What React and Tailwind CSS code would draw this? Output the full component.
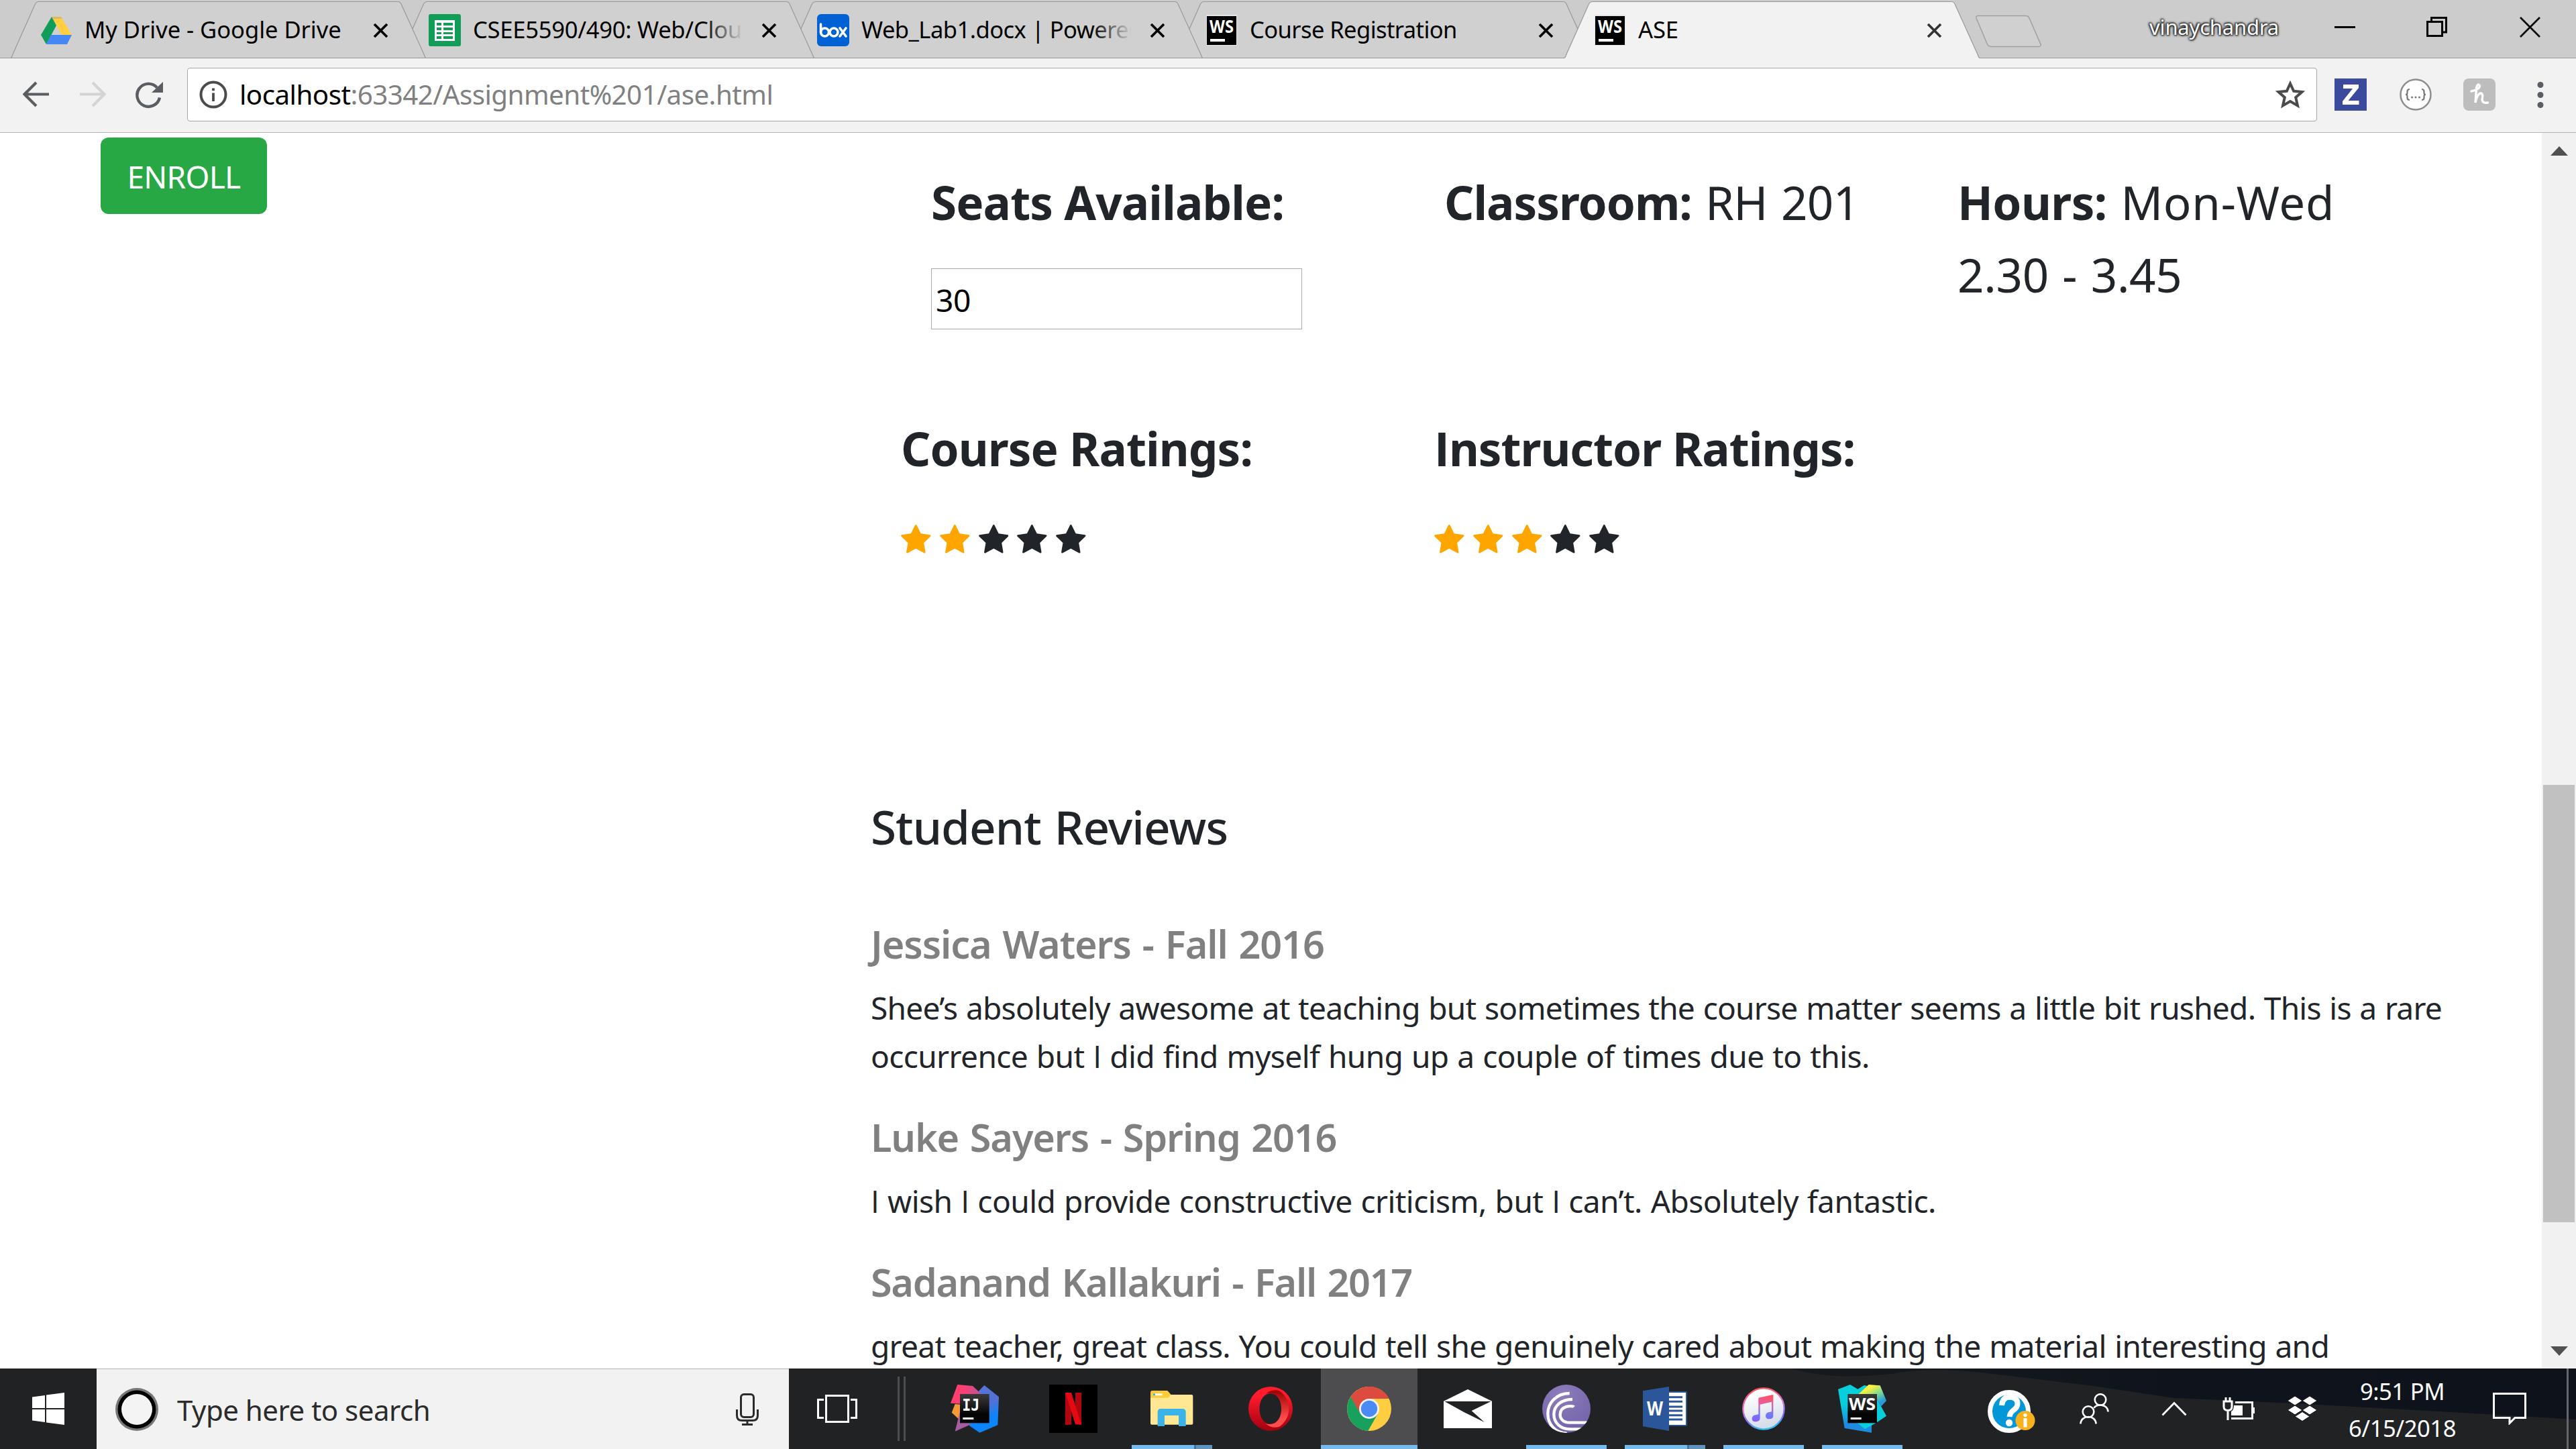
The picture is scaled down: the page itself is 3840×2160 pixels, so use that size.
import React from "react";

/* Capital I is set in Open Sans, whose I has no serifs. */
function T({ children, className = "" }) {
  const parts = String(children).split(/(I)/);
  return (
    <span className={className}>
      {parts.map((p, i) =>
        p === "I" ? (
          <span key={i} className="font-['Open_Sans']">I</span>
        ) : (
          <React.Fragment key={i}>{p}</React.Fragment>
        )
      )}
    </span>
  );
}

/* ---------- favicons ---------- */

function DriveFavicon() {
  return (
    <svg className="w-[48px] h-[48px]" viewBox="0 0 48 48">
      <path d="M17 4H31L47 31H32Z" fill="#ffcf40" />
      <path d="M17 4L24 17L9 45L1 31Z" fill="#109d59" />
      <path d="M16 31H47L40 45H9Z" fill="#4587f4" />
      <path d="M17 4H31L33 7H19Z" fill="#b9a76f" opacity="0.5" />
    </svg>
  );
}

function SheetsFavicon() {
  return (
    <svg className="w-[48px] h-[48px]" viewBox="0 0 48 48">
      <rect width="48" height="48" rx="3" fill="#109d58" />
      <path
        d="M9 9H39V40H9ZM12 13V17H19V13ZM22 13V17H36V13ZM12 20V24H19V20ZM22 20V24H36V20ZM12 27V30H19V27ZM22 27V30H36V27ZM12 33V37H19V33ZM22 33V37H36V33Z"
        fill="#fff"
        fillRule="evenodd"
      />
    </svg>
  );
}

function BoxFavicon() {
  return (
    <svg className="w-[48px] h-[48px]" viewBox="0 0 48 48">
      <rect width="48" height="48" rx="6" fill="#0061d5" />
      <g fill="none" stroke="#fff" strokeWidth="3.6" strokeLinecap="round">
        <path d="M5.5 15V27" />
        <circle cx="11.5" cy="27" r="6" />
        <circle cx="25" cy="27" r="6" />
        <path d="M34 21L43 33M43 21L34 33" />
      </g>
    </svg>
  );
}

function WsFavicon() {
  return (
    <svg className="w-[48px] h-[48px]" viewBox="0 0 48 48">
      <rect x="1" y="1" width="46" height="46" fill="#e6e6e6" />
      <rect x="2" y="3" width="44" height="43" fill="#000" />
      <text x="6" y="27.500" textLength="36" lengthAdjust="spacingAndGlyphs" fontFamily="Open Sans" fontWeight="700" fontSize="27" fill="#fff">WS</text>
      <rect x="7" y="37" width="22" height="4" fill="#fff" />
    </svg>
  );
}

/* ---------- tab strip ---------- */

const tabs = [
  { title: "My Drive - Google Drive", icon: DriveFavicon, track: "tracking-[-0.001em]", z: "z-40", first: true },
  { title: "CSEE5590/490: Web/Clou", icon: SheetsFavicon, track: "tracking-[-0.0076em]", z: "z-30", fade: true },
  { title: "Web_Lab1.docx | Powered", icon: BoxFavicon, track: "tracking-[-0.0155em]", z: "z-20", fade: true },
  { title: "Course Registration", icon: WsFavicon, track: "tracking-[-0.0172em]", z: "z-10" },
  { title: "ASE", icon: WsFavicon, track: "tracking-[-0.003em]", z: "z-50", active: true },
];

function Tab({ tab }) {
  const Icon = tab.icon;
  return (
    <div className={`relative flex h-[87px] w-[619px] shrink-0 items-start pl-[44px] ${tab.z} ${tab.first ? "" : "-ml-[40px]"}`}>
      <svg className="absolute left-0 top-0 h-[87px] w-[619px]" viewBox="0 0 619 87">
        <path
          d="M0 87Q2 85 3 81L36 7Q38 2.5 42 2.5H577Q581 2.5 582.5 7L616 81Q617 85 619 87Z"
          fill={tab.active ? "#f2f2f2" : "#d0d0d0"}
        />
        <path
          d={tab.active ? "M0 86.5Q2 85 3 81L36 7Q38 2.5 42 2.5H577Q581 2.5 582.5 7L616 81Q617 85 619 86.5" : "M0 86.5Q2 85 3 81L36 7Q38 2.5 42 2.5H577Q581 2.5 582.5 7L616 81Q617 85 619 86.5H0"}
          fill="none"
          stroke="#999"
          strokeWidth="1.2"
        />
      </svg>
      <div className="relative mt-[21px] h-[48px] w-[48px]">
        <Icon />
      </div>
      <div className="relative ml-[18px] mt-[19px] h-[50px] w-[403px] overflow-hidden whitespace-nowrap">
        <T className={`block text-[34.56px] leading-[50px] text-black ${tab.track}`}>{tab.title}</T>
        {tab.fade && <div className="absolute right-0 top-0 h-full w-[60px] bg-gradient-to-r from-[#d0d0d000] to-[#d0d0d0]" />}
      </div>
      <svg className="relative ml-[27px] mt-[35px] h-[21px] w-[23px]" viewBox="0 0 23 21">
        <path d="M2 1L21 20M21 1L2 20" stroke={tab.active ? "#333" : "#000"} strokeWidth="3.6" />
      </svg>
    </div>
  );
}

function TabStrip() {
  return (
    <div className="relative flex h-[87px] bg-[#cccccc] pl-[16px]">
      <div className="absolute bottom-0 left-0 h-px w-full bg-[#999]" />
      {tabs.map((t) => (
        <Tab key={t.title} tab={t} />
      ))}
      <svg className="relative -ml-[7px] mt-[22px] h-[49px] w-[100px]" viewBox="0 0 100 49">
        <path d="M5 1.5H75Q80 1.5 81 5L98 44Q99 47.500 95 47.500H25Q20 47.500 18.500 44L2 5Q1 1.500 5 1.500Z" fill="#d0d0d0" stroke="#a0a0a0" strokeWidth="1.5" />
      </svg>
      <div className="ml-auto flex items-start pr-[53px]">
        <span className="mt-[17px] text-[31px] leading-[46px] tracking-[-0.2px] text-white [text-shadow:0_0_3px_#222,0_0_4px_#222,1px_1px_3px_#222,-1px_-1px_3px_#222]">vinaychandra</span>
        <svg className="ml-[83px] mt-[25px] h-[31px] w-[31px]" viewBox="0 0 31 31"><path d="M0 15.500H31" stroke="#000" strokeWidth="3" /></svg>
        <svg className="ml-[106px] mt-[25px] h-[31px] w-[31px]" viewBox="0 0 31 31"><path d="M1.500 7.500H23.500V28.500H1.500ZM7.500 7.500V1.500H29.500V23H23.500" fill="none" stroke="#000" strokeWidth="3" /></svg>
        <svg className="ml-[108px] mt-[25px] h-[31px] w-[31px]" viewBox="0 0 31 31"><path d="M1 1L30 30M30 1L1 30" stroke="#000" strokeWidth="2.600" /></svg>
      </div>
    </div>
  );
}

/* ---------- toolbar ---------- */

function Toolbar() {
  return (
    <div className="flex h-[111px] items-start border-b border-[#b4b4b4] bg-[#f2f2f2]">
      <svg className="ml-[34px] mt-[34px] h-[40px] w-[40px]" viewBox="0 0 40 40"><path d="M20 2L2.500 19.500L20 37M3 19.500H39" fill="none" stroke="#5a5d61" strokeWidth="4.200" /></svg>
      <svg className="ml-[44px] mt-[34px] h-[40px] w-[40px]" viewBox="0 0 40 40"><path d="M20 2L37.500 19.500L20 37M1 19.500H37" fill="none" stroke="#d3d4d5" strokeWidth="4.200" /></svg>
      <svg className="ml-[43px] mt-[34px] h-[42px] w-[43px]" viewBox="0 0 43 42">
        <path d="M37 24.500A17 17 0 1 1 33 9.500" fill="none" stroke="#5a5d61" strokeWidth="4.400" />
        <path d="M42 1V17H25Z" fill="#5a5d61" />
      </svg>
      <div className="ml-[35px] mt-[14px] flex h-[80px] w-[3175px] items-center rounded-[4px] border border-[#a6a6a6] bg-white pl-[17px] pr-[16px]">
        <svg className="h-[42px] w-[42px] shrink-0" viewBox="0 0 42 42">
          <circle cx="21" cy="21" r="18.500" fill="none" stroke="#4b4b4b" strokeWidth="4" />
          <path d="M21 18.500V31" stroke="#4b4b4b" strokeWidth="3.800" />
          <path d="M21 11.500V15.300" stroke="#4b4b4b" strokeWidth="3.800" />
        </svg>
        <div className="ml-[18px] whitespace-nowrap text-[40.32px] leading-[60px] tracking-[-0.0135em] text-[#808080]">
          <span className="text-black">localhost</span>:63342/Assignment%201/ase.html
        </div>
        <svg className="ml-auto h-[44px] w-[46px]" viewBox="0 0 46 44">
          <path d="M23 5.500L28.200 16.800L40.500 18L31.200 26.200L34 38.500L23 32L12 38.500L14.800 26.200L5.500 18L17.800 16.800Z" fill="none" stroke="#4b4b4b" strokeWidth="4" />
        </svg>
      </div>
      <svg className="ml-[26px] mt-[30px] h-[48px] w-[48px]" viewBox="0 0 48 48">
        <rect width="48" height="48" fill="#3c4a9d" />
        <path d="M13 9H36V14L20.500 33H36.500V39H12V34L27 15H13Z" fill="#fff" />
      </svg>
      <svg className="ml-[49px] mt-[30px] h-[48px] w-[48px]" viewBox="0 0 48 48">
        <circle cx="24" cy="24" r="22.500" fill="#fff" stroke="#8d8d8d" strokeWidth="2.500" />
        <path d="M15 16Q11.500 16 11.500 19.500V21.500Q11.500 24 9 24Q11.500 24 11.500 26.500V29Q11.500 32 15 32M33 16Q36.500 16 36.500 19.500V21.500Q36.500 24 39 24Q36.500 24 36.500 26.500V29Q36.500 32 33 32" fill="none" stroke="#777" strokeWidth="2.200" />
        <g fill="#777"><circle cx="18.500" cy="28" r="1.500" /><circle cx="24" cy="28" r="1.500" /><circle cx="29.500" cy="28" r="1.500" /></g>
      </svg>
      <svg className="ml-[47px] mt-[30px] h-[48px] w-[48px]" viewBox="0 0 48 48">
        <rect width="48" height="48" rx="8" fill="#bdbdbd" />
        <path d="M12 19Q25 16 24.500 10.500Q21 6.500 19.500 14L18 36Q21 22 26.500 22Q30 23 28 31Q28.500 37.500 36.500 36" fill="none" stroke="#fff" strokeWidth="3.400" strokeLinecap="round" />
      </svg>
      <svg className="ml-[61px] mt-[34px] h-[41px] w-[12px]" viewBox="0 0 12 41">
        <g fill="#5a5d61"><circle cx="6" cy="5.500" r="4.500" /><circle cx="6" cy="20.500" r="4.500" /><circle cx="6" cy="35.500" r="4.500" /></g>
      </svg>
    </div>
  );
}

/* ---------- page ---------- */

function Star({ on }) {
  return (
    <svg className="h-[42.500px] w-[44.600px]" viewBox="0 0 1664 1587">
      <path
        fill={on ? "#ffa500" : "#212529"}
        d="M1664 615q0 22-26 48l-363 354 86 500q1 7 1 20 0 21-10.500 35.500t-30.500 14.500q-19 0-40-12l-449-236-449 236q-22 12-40 12-21 0-31.500-14.500t-10.500-35.500q0-6 2-20l86-500-364-354q-25-27-25-48 0-37 56-46l502-73 225-455q19-41 49-41t49 41l225 455 502 73q56 9 56 46z"
      />
    </svg>
  );
}

function Rating({ label, score, className, track }) {
  return (
    <div className={className}>
      <h3 className={`text-[69.12px] font-bold leading-[108px] ${track}`}><T>{label}</T></h3>
      <div className="mt-[60px] flex gap-[13.200px]">
        {[1, 2, 3, 4, 5].map((n) => <Star key={n} on={n <= score} />)}
      </div>
    </div>
  );
}

const reviews = [
  {
    who: "Jessica Waters - Fall 2016",
    whoTrack: "tracking-[-0.0187em]",
    lines: [
      ["Shee’s absolutely awesome at teaching but sometimes the course matter seems a little bit rushed. This is a rare", "tracking-[-0.0168em]"],
      ["occurrence but I did find myself hung up a couple of times due to this.", "tracking-[-0.0134em]"],
    ],
  },
  {
    who: "Luke Sayers - Spring 2016",
    whoTrack: "tracking-[-0.0200em]",
    lines: [["I wish I could provide constructive criticism, but I can’t. Absolutely fantastic.", "tracking-[-0.0124em]"]],
  },
  {
    who: "Sadanand Kallakuri - Fall 2017",
    whoTrack: "tracking-[-0.0228em]",
    lines: [["great teacher, great class. You could tell she genuinely cared about making the material interesting and", "tracking-[-0.0156em]"]],
  },
];

function Scrollbar() {
  return (
    <div className="flex w-[51px] shrink-0 flex-col items-center bg-[#f1f1f1]">
      <svg className="mt-[20px] h-[14px] w-[26px]" viewBox="0 0 26 14"><path d="M0 14L13 0L26 14Z" fill="#505050" /></svg>
      <div className="mt-[938px] h-[652px] w-[47px] bg-[#c1c1c1]" />
      <svg className="mb-[19px] mt-auto h-[14px] w-[26px]" viewBox="0 0 26 14"><path d="M0 0L13 14L26 0Z" fill="#505050" /></svg>
    </div>
  );
}

function Page() {
  return (
    <div className="flex h-[1842px] overflow-hidden bg-white text-[#212529]">
      <div className="w-[1298px] shrink-0 pl-[150px] pt-[7px]">
        <button className="h-[114px] w-[248px] rounded-[12px] bg-[#28a745] pt-[3px] text-[46.08px] leading-[72px] tracking-[-0.0166em] text-white">ENROLL</button>
      </div>
      <main className="grow whitespace-nowrap pt-[49px]">
        <div className="flex h-[367px] pl-[90px] text-[69.12px] leading-[108px]">
          <div className="w-[765px]">
            <h3 className="font-bold tracking-[-0.0124em]">Seats Available:</h3>
            <div className="mt-[45px] flex h-[91px] w-[553px] items-start border border-[#a9a9a9] bg-white pl-[6px] pt-[11px] text-[46.08px] leading-[72px] tracking-[-0.0079em] text-black">30</div>
          </div>
          <div className="w-[765px]">
            <span className="font-bold tracking-[-0.0140em]">Classroom:</span><span className="tracking-[-0.0090em] [word-spacing:0.04em]"> RH 201</span>
          </div>
          <div>
            <div><span className="font-bold tracking-[-0.0080em]">Hours:</span><span className="tracking-[0.0100em] [word-spacing:0.03em]"> Mon-Wed</span></div>
            <div className="tracking-[-0.0045em] [word-spacing:0.04em]">2.30 - 3.45</div>
          </div>
        </div>
        <div className="flex h-[210px] pl-[45px]">
          <Rating className="w-[795px]" label="Course Ratings:" score={2} track="tracking-[-0.0130em]" />
          <Rating label="Instructor Ratings:" score={3} track="tracking-[-0.0145em]" />
        </div>
        <h4 className="mb-[96px] mt-[365px] text-[69.12px] font-medium leading-[86px] tracking-[-0.0130em] [word-spacing:0.04em]">Student Reviews</h4>
        {reviews.map((r) => (
          <section key={r.who} className="mb-[48px]">
            <h5 className={`mb-[24px] text-[57.6px] font-semibold leading-[72px] text-[#808080] [word-spacing:0.05em] ${r.whoTrack}`}>{r.who}</h5>
            {r.lines.map(([text, track]) => (
              <p key={text} className={`text-[46.08px] leading-[72px] [word-spacing:0.03em] ${track}`}><T>{text}</T></p>
            ))}
          </section>
        ))}
      </main>
      <Scrollbar />
    </div>
  );
}

/* ---------- taskbar ---------- */

function IntelliJ() {
  return (
    <svg className="h-[72px] w-[72px]" viewBox="0 0 216 216">
      <defs>
        <linearGradient id="ijBlue" x1="0.3" y1="0" x2="0.6" y2="1"><stop offset="0" stopColor="#5a73dc" /><stop offset="0.45" stopColor="#5272d4" /><stop offset="0.75" stopColor="#0c84fb" /></linearGradient>
        <linearGradient id="ijPink" x1="0" y1="0" x2="1" y2="0"><stop offset="0.4" stopColor="#ff3f70" /><stop offset="1" stopColor="#b5559b" /></linearGradient>
        <linearGradient id="tileDark" x1="0" y1="0" x2="0" y2="1"><stop offset="0" stopColor="#3a3a3a" /><stop offset="0.7" stopColor="#050505" /></linearGradient>
      </defs>
      <path d="M20 87L50 90L48 165L5 125Z" fill="#f59a35" />
      <path d="M42 120L20 209L120 165L100 120Z" fill="#a65ca0" />
      <path d="M151 3L216 55L211 181L130 215L84 184L110 45Z" fill="url(#ijBlue)" />
      <path d="M31 0L99 6L140 45L100 90L0 83Z" fill="url(#ijPink)" />
      <rect x="42" y="42" width="131" height="130" fill="url(#tileDark)" />
      <text x="52" y="116" textLength="78" lengthAdjust="spacingAndGlyphs" fontFamily="DejaVu Sans Mono" fontWeight="700" fontSize="76" fill="#fff">IJ</text>
      <rect x="55" y="147" width="48" height="9" fill="#fff" />
    </svg>
  );
}

function Netflix() {
  return (
    <svg className="h-[72px] w-[72px]" viewBox="0 0 216 216">
      <rect width="216" height="216" fill="#000" />
      <path d="M72 36H99V179L72 180ZM117 36H144V180L117 176Z" fill="#b1060f" />
      <path d="M72 36H99L144 180Q130 177 117 177Z" fill="#e50914" />
    </svg>
  );
}

function Folder() {
  return (
    <svg className="h-[54px] w-[64px]" viewBox="0 0 192 162">
      <path d="M0 8Q0 0 8 0H76L92 18V40H0Z" fill="#fdcb36" />
      <path d="M0 32H78L92 18H184Q190 18 190 24V146Q190 152 184 152H6Q0 152 0 146Z" fill="#ffe794" />
      <rect x="12" y="13" width="41" height="9" fill="#fff" /><rect x="12" y="13" width="9" height="9" fill="#3bb4ea" />
      <path d="M32 159V96Q32 81 46 81H144Q158 81 158 96V159H126V111H63V159Z" fill="#39b3e8" />
    </svg>
  );
}

function Opera() {
  return (
    <svg className="h-[66px] w-[66px]" viewBox="0 0 200 200">
      <defs>
        <linearGradient id="opA" x1="0" y1="0" x2="0" y2="1"><stop offset="0.2" stopColor="#ff1b2d" /><stop offset="1" stopColor="#a2000f" /></linearGradient>
        <linearGradient id="opB" x1="0" y1="0" x2="0" y2="1"><stop offset="0" stopColor="#9c0000" /><stop offset="0.75" stopColor="#ff4b4b" /></linearGradient>
      </defs>
      <path d="M100 0A100 100 0 1 0 100 200A100 100 0 1 0 100 0ZM100 31C130 31 149 62 149 100S130 169 100 169S50 138 50 100S70 31 100 31Z" fill="url(#opA)" fillRule="evenodd" />
      <path d="M76 34Q105 8 140 19A98 98 0 0 1 140 181Q105 192 76 166Q86 171 100 169C130 169 149 138 149 100S130 31 100 31Q86 29 76 34Z" fill="url(#opB)" />
    </svg>
  );
}

function Chrome() {
  return (
    <svg className="h-[66px] w-[66px]" viewBox="0 0 198 198">
      <circle cx="99" cy="99" r="99" fill="#fecd40" />
      <path d="M99 99H60L16 46A99 99 0 0 0 94 198L138 121Z" fill="#17a15d" />
      <path d="M99 54H188A99 99 0 0 0 16 46L58 118Z" fill="#dc4b3e" />
      <circle cx="99" cy="99" r="45" fill="#f1f1f1" />
      <circle cx="99" cy="99" r="36.500" fill="#4a8af4" />
    </svg>
  );
}

function Mail() {
  return (
    <svg className="h-[58px] w-[72px]" viewBox="0 0 216 174">
      <path d="M0 53L108 0L216 53V174H0Z" fill="#fff" />
      <path d="M4 54H212L125 96L182 147L92 103Z" fill="#202224" />
    </svg>
  );
}

function BitTorrent() {
  return (
    <svg className="h-[72px] w-[72px]" viewBox="0 0 216 216">
      <defs>
        <radialGradient id="bt" cx="0.4" cy="0.2" r="0.9"><stop offset="0" stopColor="#8e7dba" /><stop offset="1" stopColor="#7060a8" /></radialGradient>
        <clipPath id="btClip"><circle cx="108" cy="108" r="108" /></clipPath>
      </defs>
      <circle cx="108" cy="108" r="108" fill="url(#bt)" />
      <g fill="none" stroke="#fff" strokeWidth="13" clipPath="url(#btClip)">
        <path d="M122 39C60 39 25 85 25 130C25 180 60 216 110 218" />
        <path d="M135 66C85 66 52 95 52 133C52 172 82 199 122 199H190" />
        <path d="M142 100C135 93 80 92 80 135C80 155 97 170 122 170H205" />
      </g>
    </svg>
  );
}

function Word() {
  return (
    <svg className="h-[66px] w-[66px]" viewBox="0 0 198 198">
      <rect x="100" y="21" width="98" height="155" rx="5" fill="#2b569a" />
      <rect x="110" y="27" width="82" height="144" fill="#fff" />
      <path d="M112 47H177M112 67H177M112 90H177M112 108H177M112 128H177M112 147H177" stroke="#2b569a" strokeWidth="9" />
      <path d="M0 19L117 0V198L0 178Z" fill="#2b579a" />
      <text x="18" y="130" textLength="72" lengthAdjust="spacingAndGlyphs" fontFamily="Open Sans" fontWeight="700" fontSize="88" fill="#fff">W</text>
    </svg>
  );
}

function ITunes() {
  return (
    <svg className="h-[64px] w-[64px]" viewBox="0 0 192 192">
      <defs>
        <linearGradient id="itRing" x1="0.35" y1="0" x2="0.55" y2="1"><stop offset="0" stopColor="#ff4f55" /><stop offset="0.45" stopColor="#d879d8" /><stop offset="0.75" stopColor="#7a6cf5" /><stop offset="1" stopColor="#2fc4fb" /></linearGradient>
        <linearGradient id="itBg" x1="0" y1="0" x2="0.3" y2="1"><stop offset="0.2" stopColor="#fff" /><stop offset="1" stopColor="#d5dcea" /></linearGradient>
        <linearGradient id="itNote" x1="0.5" y1="0" x2="0.4" y2="1"><stop offset="0" stopColor="#ff4f5e" /><stop offset="0.35" stopColor="#e25fa5" /><stop offset="0.7" stopColor="#6b7dfb" /><stop offset="1" stopColor="#8a5cff" /></linearGradient>
      </defs>
      <circle cx="96" cy="96" r="92" fill="url(#itBg)" stroke="url(#itRing)" strokeWidth="7" />
      <path d="M73 47L139 33V128Q139 141 122 142Q105 142 105 128Q105 113 122 111L132 109V65L80 77V138Q80 153 61 154Q44 154 44 140Q44 126 60 124L73 121Z" fill="url(#itNote)" />
    </svg>
  );
}

function WebStorm() {
  return (
    <svg className="h-[72px] w-[72px]" viewBox="0 0 216 216">
      <defs>
        <linearGradient id="wsA" x1="0.6" y1="0" x2="0.5" y2="1"><stop offset="0.45" stopColor="#07cfdb" /><stop offset="0.85" stopColor="#1f8ae0" /></linearGradient>
        <linearGradient id="wsB" x1="0.2" y1="0" x2="0.9" y2="1"><stop offset="0.2" stopColor="#fdf03f" /><stop offset="0.5" stopColor="#7fdc90" /><stop offset="0.8" stopColor="#2b9bd8" /></linearGradient>
      </defs>
      <path d="M0 21L54 0L88 20L117 3L150 10V215L29 195Z" fill="url(#wsA)" />
      <path d="M172 60L216 140L172 170L120 199L60 150V40Z" fill="#07cfdb" />
      <path d="M137 0L188 4L216 72L190 100L172 60L90 44Z" fill="url(#wsB)" />
      <rect x="43" y="42" width="131" height="130" fill="url(#tileDark)" />
      <text x="48" y="115" textLength="120" lengthAdjust="spacingAndGlyphs" fontFamily="Open Sans" fontWeight="700" fontSize="76" fill="#fff">WS</text>
      <rect x="56" y="147" width="48" height="9" fill="#fff" />
    </svg>
  );
}

const apps = [
  { name: "intellij", icon: IntelliJ },
  { name: "netflix", icon: Netflix },
  { name: "folder", icon: Folder, bar: "split" },
  { name: "opera", icon: Opera },
  { name: "chrome", icon: Chrome, bar: "full" },
  { name: "mail", icon: Mail },
  { name: "bittorrent", icon: BitTorrent, bar: "plain" },
  { name: "word", icon: Word, bar: "split" },
  { name: "itunes", icon: ITunes, bar: "plain" },
  { name: "webstorm", icon: WebStorm, bar: "plain" },
];

function AppButton({ app }) {
  const Icon = app.icon;
  return (
    <div className={`relative flex h-[120px] w-[144px] items-center justify-center ${app.bar === "full" ? "bg-[#4d4d4f]" : ""}`}>
      <Icon />
      {app.bar === "full" && <div className="absolute bottom-0 left-0 h-[6px] w-full bg-[#76b9ed]" />}
      {app.bar === "plain" && <div className="absolute bottom-0 left-[12px] h-[6px] w-[120px] bg-[#76b9ed]" />}
      {app.bar === "split" && (
        <div className="absolute bottom-0 left-[12px] flex h-[6px] w-[120px]">
          <div className="w-[93px] bg-[#76b9ed]" />
          <div className="w-[3px] bg-[#4a7497]" />
          <div className="w-[24px] bg-[#6094bf]" />
        </div>
      )}
    </div>
  );
}

function Taskbar() {
  return (
    <div className="relative flex h-[120px] items-center bg-[#202224]">
      <svg className="absolute right-0 top-0 h-[120px] w-[1200px]" viewBox="0 0 1200 120">
        <defs><linearGradient id="night" x1="0" y1="0" x2="1" y2="0"><stop offset="0" stopColor="#171b1f" /><stop offset="0.5" stopColor="#0f141c" /><stop offset="1" stopColor="#0d121b" /></linearGradient></defs>
        <path d="M30 0Q90 18 180 8Q240 -4 330 8L480 26L600 44L780 52L960 62L1200 76V0Z" fill="url(#night)" />
      </svg>
      <div className="relative flex h-full w-[144px] items-center justify-center">
        <svg className="h-[48px] w-[48px]" viewBox="0 0 48 48"><path d="M0 6.500L19 4V23H0ZM21 3.500L48 0V23H21ZM0 25H19V44L0 41.500ZM21 25H48V48L21 44.500Z" fill="#fff" /></svg>
      </div>
      <div className="relative flex h-full w-[1032px] items-center border-t border-[#b4b4b4] bg-[#f2f2f2] pl-[28px]">
        <svg className="h-[64px] w-[64px]" viewBox="0 0 64 64">
          <circle cx="32" cy="32" r="32" fill="#777" />
          <circle cx="32" cy="32" r="28.500" fill="#000" />
          <circle cx="32" cy="32" r="23" fill="#f4f4f4" />
        </svg>
        <span className="mt-[2px] ml-[28px] text-[42px] leading-[60px] tracking-[-0.5px] text-[#2b2b2b]">Type here to search</span>
        <svg className="ml-auto mr-[45px] h-[48px] w-[34px]" viewBox="0 0 34 48">
          <rect x="7.500" y="1.500" width="19" height="34" rx="4.500" fill="none" stroke="#2b2b2b" strokeWidth="3" />
          <path d="M1.500 24V33Q1.500 40.500 9 40.500H25Q32.500 40.500 32.500 33V24M17 41V46M9 46.500H25" fill="none" stroke="#2b2b2b" strokeWidth="3" />
        </svg>
      </div>
      <svg className="relative ml-[42px] h-[42px] w-[60px]" viewBox="0 0 60 42">
        <path d="M13.500 1.500H46.500V40.500H13.500ZM10 7.500H1.500V34.500H10M50 7.500H58.500V34.500H50" fill="none" stroke="#fff" strokeWidth="3" />
      </svg>
      <div className="relative ml-[60px] h-[96px] w-[12px] border-x-[3px] border-[#4b4d4e]" />
      <div className="relative ml-[31px] flex gap-[3px]">
        {apps.map((a) => <AppButton key={a.name} app={a} />)}
      </div>
      <svg className="relative ml-[115px] mt-[8px] h-[66px] w-[72px]" viewBox="0 0 72 66">
        <circle cx="32" cy="33" r="28.500" fill="#0297d9" stroke="#fff" strokeWidth="7" />
        <path d="M21 24Q22 11.500 33 11.500Q44.500 12 44.500 21.500Q44.500 27 38 31.500Q33 35.500 32.500 41" fill="none" stroke="#fff" strokeWidth="8" />
        <circle cx="32" cy="50" r="5.200" fill="#fff" />
        <circle cx="56" cy="46.500" r="14.500" fill="#f6b11d" />
        <path d="M56 43V56.500" stroke="#fff" strokeWidth="5" /><circle cx="56" cy="38.500" r="2.700" fill="#fff" />
      </svg>
      <svg className="relative ml-[65px] h-[46px] w-[44px]" viewBox="0 0 44 46">
        <g fill="none" stroke="#fff" strokeWidth="2.600">
          <circle cx="31" cy="9.500" r="8.300" /><circle cx="13" cy="27.500" r="8.300" />
          <path d="M1.500 45.500C2 31.500 24 31.500 24.500 45.500M21.500 22C24 15.500 42 15 42.500 27.500" />
        </g>
      </svg>
      <svg className="relative ml-[78px] h-[22px] w-[38px]" viewBox="0 0 38 22"><path d="M1.500 20.500L19 2.500L36.500 20.500" fill="none" stroke="#fff" strokeWidth="2.800" /></svg>
      <svg className="relative ml-[53px] h-[34px] w-[49px]" viewBox="0 0 49 34">
        <path d="M19 7.500H44.500V31.500H13M46.500 15V24" fill="none" stroke="#fff" strokeWidth="3" />
        <path d="M17 12H30V27H13V21Q17 19 17 12Z" fill="#fff" />
        <path d="M2 6H14V14Q14 19.500 8 19.500Q2 19.500 2 14ZM5 6V0M11 6V0M8 20V34" fill="none" stroke="#fff" strokeWidth="3" />
      </svg>
      <svg className="relative ml-[47px] h-[38px] w-[46px]" viewBox="0 0 46 38">
        <path d="M12 0L23 7L12 14L1 7ZM34 0L45 7L34 14L23 7ZM12 14L23 21L12 28L1 21ZM34 14L45 21L34 28L23 21ZM23 23.500L34 30.500L23 37.500L12 30.500Z" fill="#fff" stroke="#111417" strokeWidth="1" />
      </svg>
      <div className="relative ml-[41px] mt-[2px] flex w-[170px] flex-col items-center text-[34.56px] leading-[55px] text-white">
        <span className="tracking-[-0.0157em]">9:51 PM</span>
        <span className="tracking-[-0.0132em]">6/15/2018</span>
      </div>
      <svg className="relative ml-[50px] h-[48px] w-[50px]" viewBox="0 0 50 48">
        <path d="M1.500 1.500H48.500V37.500H33L25 45.500V37.500H1.500Z" fill="none" stroke="#fff" strokeWidth="3" />
      </svg>
      <div className="absolute right-[11px] top-0 h-[120px] w-[3px] bg-[#63666a]" />
    </div>
  );
}

export default function App() {
  return (
    <div className="h-[2160px] w-[3840px] overflow-hidden bg-white font-['Noto_Sans','Open_Sans',sans-serif]">
      <TabStrip />
      <Toolbar />
      <Page />
      <Taskbar />
    </div>
  );
}
